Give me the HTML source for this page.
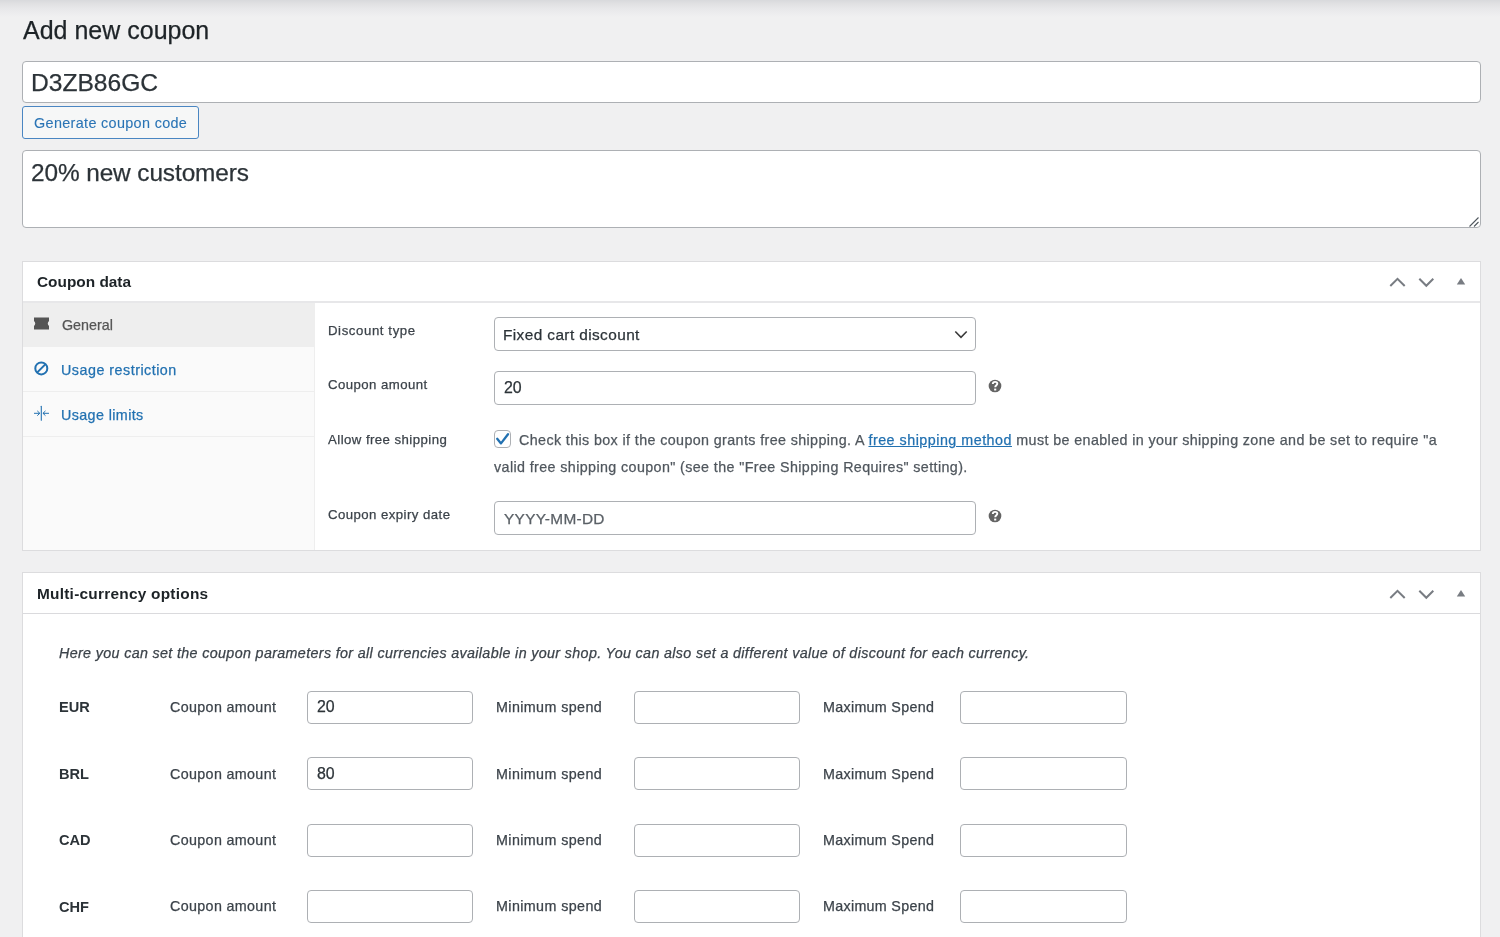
<!DOCTYPE html>
<html><head><meta charset="utf-8"><title>Add new coupon</title>
<style>
html,body{margin:0;padding:0}
body{width:1500px;height:937px;overflow:hidden;position:relative;background:#f0f0f1;font-family:"Liberation Sans",sans-serif}
.t{position:absolute;white-space:nowrap;will-change:transform;-webkit-text-stroke:0.25px currentColor}
.b{position:absolute}
</style></head><body>
<div class="b" style="left:0;top:0;width:1500px;height:18px;background:linear-gradient(#d8d9dc 0px,#dfdfe1 3px,#e7e7e9 8px,#ececee 13px,#f0f0f1 17px)"></div>
<div class="t" style="left:22.5px;top:14.64px;font-size:25px;line-height:31px;color:#1d2327;font-weight:400;font-style:normal;letter-spacing:0px;">Add new coupon</div>
<div class="b" style="left:22px;top:61px;width:1459px;height:42px;background:#fff;border:1px solid #adb0b4;border-radius:4px;box-sizing:border-box"></div>
<div class="t" style="left:31.0px;top:67.48px;font-size:24.6px;line-height:31px;color:#2c3338;font-weight:400;font-style:normal;letter-spacing:0px;">D3ZB86GC</div>
<div class="b" style="left:22px;top:106px;width:177px;height:33px;background:#f6f7f7;border:1px solid #4a86c2;border-radius:3px;box-sizing:border-box"></div>
<div class="t" style="left:33.7px;top:113.71px;font-size:14.4px;line-height:18px;color:#2a74b5;font-weight:400;font-style:normal;letter-spacing:0.34px;-webkit-text-stroke:0.1px currentColor">Generate coupon code</div>
<div class="b" style="left:22px;top:150px;width:1459px;height:78px;background:#fff;border:1px solid #adb0b4;border-radius:4px;box-sizing:border-box"></div>
<div class="t" style="left:31.0px;top:157.85px;font-size:24.4px;line-height:30px;color:#2c3338;font-weight:400;font-style:normal;letter-spacing:-0.1px;">20% new customers</div>
<svg class="b" style="left:1467px;top:214.5px" width="13" height="13" viewBox="0 0 13 13"><path d="M2.5 11.5 L11.5 2.5 M7 11.5 L11.5 7" stroke="#50575e" stroke-width="1.1" fill="none"/></svg>
<div class="b" style="left:22px;top:261px;width:1459px;height:290px;background:#fff;border:1px solid #dcdcde;box-sizing:border-box"></div>
<div class="b" style="left:23px;top:301px;width:1457px;height:2px;background:#e7e7e9"></div>
<div class="t" style="left:37.0px;top:272.16px;font-size:15.4px;line-height:19px;color:#1d2327;font-weight:700;font-style:normal;letter-spacing:0px;-webkit-text-stroke:0">Coupon data</div>
<svg class="b" style="left:1385px;top:277px" width="90" height="16" viewBox="0 0 90 16"><path d="M5.3 9 L12.5 1.8 L19.7 9" stroke="#787c82" stroke-width="2" fill="none"/><path d="M34.3 1.8 L41.3 8.8 L48.3 1.8" stroke="#787c82" stroke-width="2" fill="none"/><path d="M76 0.9 L80.2 7.4 L71.8 7.4 Z" fill="#787c82"/></svg>
<div class="b" style="left:23px;top:303px;width:292px;height:247px;background:#fafafa;border-right:1px solid #eee;box-sizing:border-box"></div>
<div class="b" style="left:23px;top:303px;width:291px;height:44px;background:#eee"></div>
<div class="b" style="left:23px;top:391px;width:291px;height:1px;background:#eee"></div>
<div class="b" style="left:23px;top:436px;width:291px;height:1px;background:#eee"></div>
<svg class="b" style="left:34px;top:317.4px" width="15" height="13" viewBox="0 0 15 13"><path d="M0 0.5 H15 V4 Q12.5 6.5 15 9 V12.5 H0 V9 Q2.5 6.5 0 4 Z" fill="#555"/></svg>
<div class="t" style="left:62.0px;top:315.85px;font-size:14.3px;line-height:18px;color:#555;font-weight:400;font-style:normal;letter-spacing:0px;">General</div>
<svg class="b" style="left:34px;top:361px" width="15" height="15" viewBox="0 0 15 15"><circle cx="7.3" cy="7.4" r="6" stroke="#2271b1" stroke-width="2" fill="none"/><path d="M3.3 11.4 L11.3 3.4" stroke="#2271b1" stroke-width="2"/></svg>
<div class="t" style="left:61.0px;top:360.75px;font-size:14.3px;line-height:18px;color:#2271b1;font-weight:400;font-style:normal;letter-spacing:0.5px;">Usage restriction</div>
<svg class="b" style="left:34px;top:405px" width="16" height="17" viewBox="0 0 16 17"><path d="M7.3 1.3 V15.3" stroke="#2271b1" stroke-width="1.1" stroke-linecap="round"/><path d="M0.4 8.3 H5.6 M3.6 6.2 L5.8 8.3 L3.6 10.4 M14.6 8.3 H9.2 M11.2 6.2 L9 8.3 L11.2 10.4" stroke="#2271b1" stroke-width="1.0" fill="none" stroke-linecap="round" stroke-linejoin="round"/></svg>
<div class="t" style="left:61.0px;top:405.65px;font-size:14.3px;line-height:18px;color:#2271b1;font-weight:400;font-style:normal;letter-spacing:0.4px;">Usage limits</div>
<div class="t" style="left:328.4px;top:323.03px;font-size:13.2px;line-height:16px;color:#3c434a;font-weight:400;font-style:normal;letter-spacing:0.6px;">Discount type</div>
<div class="b" style="left:494px;top:317px;width:482px;height:34px;background:#fff;border:1px solid #adb0b4;border-radius:4px;box-sizing:border-box"></div>
<div class="t" style="left:503.0px;top:324.86px;font-size:15.4px;line-height:19px;color:#2c3338;font-weight:400;font-style:normal;letter-spacing:0.4px;">Fixed cart discount</div>
<svg class="b" style="left:954px;top:330px" width="14" height="10" viewBox="0 0 14 10"><path d="M1.3 1.5 L7 7.3 L12.7 1.5" stroke="#3a3a3a" stroke-width="1.6" fill="none"/></svg>
<div class="t" style="left:328.4px;top:376.83px;font-size:13.2px;line-height:16px;color:#3c434a;font-weight:400;font-style:normal;letter-spacing:0.45px;">Coupon amount</div>
<div class="b" style="left:494px;top:371px;width:482px;height:34px;background:#fff;border:1px solid #adb0b4;border-radius:4px;box-sizing:border-box"></div>
<div class="t" style="left:503.5px;top:378.29px;font-size:15.9px;line-height:20px;color:#2c3338;font-weight:400;font-style:normal;letter-spacing:0px;">20</div>
<svg class="b" style="left:988.3px;top:379.1px" width="14" height="14" viewBox="0 0 14 14"><circle cx="7" cy="7" r="6.35" fill="#646464"/><path d="M4.8 5.1 C4.8 3.6 5.8 2.9 7.1 2.9 C8.4 2.9 9.3 3.7 9.3 4.8 C9.3 6.2 7.2 6.3 7.2 8.3" stroke="#fff" stroke-width="1.9" fill="none"/><rect x="6.15" y="9.6" width="2.1" height="1.9" fill="#fff"/></svg>
<div class="t" style="left:328.4px;top:431.73px;font-size:13.2px;line-height:16px;color:#3c434a;font-weight:400;font-style:normal;letter-spacing:0.45px;">Allow free shipping</div>
<div class="b" style="left:494px;top:430px;width:17px;height:17.5px;background:#fff;border:1px solid #adb0b4;border-radius:4px;box-sizing:border-box"></div>
<svg class="b" style="left:494px;top:430px" width="18" height="18" viewBox="0 0 18 18"><path d="M3.2 8.8 L7 13.4 L14 4.2" stroke="#2271b1" stroke-width="2.3" fill="none" stroke-linejoin="round" stroke-linecap="round"/></svg>
<div class="t" style="left:519.2px;top:430.95px;font-size:14.3px;line-height:18px;color:#50575e;font-weight:400;font-style:normal;letter-spacing:0.385px;white-space:nowrap">Check this box if the coupon grants free shipping. A <span style="color:#2271b1;text-decoration:underline;letter-spacing:0.5px">free shipping method</span> must be enabled in your shipping zone and be set to require "a</div>
<div class="t" style="left:494.0px;top:457.85px;font-size:14.3px;line-height:18px;color:#50575e;font-weight:400;font-style:normal;letter-spacing:0.39px;white-space:nowrap">valid free shipping coupon" (see the "Free Shipping Requires" setting).</div>
<div class="t" style="left:328.4px;top:507.23px;font-size:13.2px;line-height:16px;color:#3c434a;font-weight:400;font-style:normal;letter-spacing:0.45px;">Coupon expiry date</div>
<div class="b" style="left:494px;top:501px;width:482px;height:34px;background:#fff;border:1px solid #adb0b4;border-radius:4px;box-sizing:border-box"></div>
<div class="t" style="left:504.0px;top:508.76px;font-size:15.4px;line-height:19px;color:#5a6066;font-weight:400;font-style:normal;letter-spacing:0.3px;">YYYY-MM-DD</div>
<svg class="b" style="left:988.2px;top:509px" width="14" height="14" viewBox="0 0 14 14"><circle cx="7" cy="7" r="6.35" fill="#646464"/><path d="M4.8 5.1 C4.8 3.6 5.8 2.9 7.1 2.9 C8.4 2.9 9.3 3.7 9.3 4.8 C9.3 6.2 7.2 6.3 7.2 8.3" stroke="#fff" stroke-width="1.9" fill="none"/><rect x="6.15" y="9.6" width="2.1" height="1.9" fill="#fff"/></svg>
<div class="b" style="left:22px;top:572px;width:1459px;height:400px;background:#fff;border:1px solid #dcdcde;box-sizing:border-box"></div>
<div class="b" style="left:23px;top:613px;width:1457px;height:1px;background:#dadadd"></div>
<div class="t" style="left:37.0px;top:583.66px;font-size:15.4px;line-height:19px;color:#1d2327;font-weight:700;font-style:normal;letter-spacing:0.25px;-webkit-text-stroke:0">Multi-currency options</div>
<svg class="b" style="left:1385px;top:588.8px" width="90" height="16" viewBox="0 0 90 16"><path d="M5.3 9 L12.5 1.8 L19.7 9" stroke="#787c82" stroke-width="2" fill="none"/><path d="M34.3 1.8 L41.3 8.8 L48.3 1.8" stroke="#787c82" stroke-width="2" fill="none"/><path d="M76 0.9 L80.2 7.4 L71.8 7.4 Z" fill="#787c82"/></svg>
<div class="t" style="left:59.0px;top:643.75px;font-size:14.3px;line-height:18px;color:#3c434a;font-weight:400;font-style:italic;letter-spacing:0.35px;white-space:nowrap">Here you can set the coupon parameters for all currencies available in your shop. You can also set a different value of discount for each currency.</div>
<div class="t" style="left:59.3px;top:698.04px;font-size:14.6px;line-height:18px;color:#2c3338;font-weight:700;font-style:normal;letter-spacing:0px;-webkit-text-stroke:0">EUR</div>
<div class="t" style="left:170.0px;top:697.75px;font-size:14.3px;line-height:18px;color:#3c434a;font-weight:400;font-style:normal;letter-spacing:0.35px;">Coupon amount</div>
<div class="b" style="left:307px;top:691px;width:166px;height:33px;background:#fff;border:1px solid #adb0b4;border-radius:4px;box-sizing:border-box"></div>
<div class="t" style="left:316.8px;top:696.99px;font-size:15.9px;line-height:20px;color:#2c3338;font-weight:400;font-style:normal;letter-spacing:0px;">20</div>
<div class="t" style="left:495.7px;top:697.75px;font-size:14.3px;line-height:18px;color:#3c434a;font-weight:400;font-style:normal;letter-spacing:0.4px;">Minimum spend</div>
<div class="b" style="left:634px;top:691px;width:166px;height:33px;background:#fff;border:1px solid #adb0b4;border-radius:4px;box-sizing:border-box"></div>
<div class="t" style="left:822.8px;top:697.75px;font-size:14.3px;line-height:18px;color:#3c434a;font-weight:400;font-style:normal;letter-spacing:0.3px;">Maximum Spend</div>
<div class="b" style="left:960px;top:691px;width:167px;height:33px;background:#fff;border:1px solid #adb0b4;border-radius:4px;box-sizing:border-box"></div>
<div class="t" style="left:59.3px;top:764.84px;font-size:14.6px;line-height:18px;color:#2c3338;font-weight:700;font-style:normal;letter-spacing:0px;-webkit-text-stroke:0">BRL</div>
<div class="t" style="left:170.0px;top:764.55px;font-size:14.3px;line-height:18px;color:#3c434a;font-weight:400;font-style:normal;letter-spacing:0.35px;">Coupon amount</div>
<div class="b" style="left:307px;top:757px;width:166px;height:33px;background:#fff;border:1px solid #adb0b4;border-radius:4px;box-sizing:border-box"></div>
<div class="t" style="left:316.8px;top:763.79px;font-size:15.9px;line-height:20px;color:#2c3338;font-weight:400;font-style:normal;letter-spacing:0px;">80</div>
<div class="t" style="left:495.7px;top:764.55px;font-size:14.3px;line-height:18px;color:#3c434a;font-weight:400;font-style:normal;letter-spacing:0.4px;">Minimum spend</div>
<div class="b" style="left:634px;top:757px;width:166px;height:33px;background:#fff;border:1px solid #adb0b4;border-radius:4px;box-sizing:border-box"></div>
<div class="t" style="left:822.8px;top:764.55px;font-size:14.3px;line-height:18px;color:#3c434a;font-weight:400;font-style:normal;letter-spacing:0.3px;">Maximum Spend</div>
<div class="b" style="left:960px;top:757px;width:167px;height:33px;background:#fff;border:1px solid #adb0b4;border-radius:4px;box-sizing:border-box"></div>
<div class="t" style="left:59.3px;top:831.14px;font-size:14.6px;line-height:18px;color:#2c3338;font-weight:700;font-style:normal;letter-spacing:0px;-webkit-text-stroke:0">CAD</div>
<div class="t" style="left:170.0px;top:830.85px;font-size:14.3px;line-height:18px;color:#3c434a;font-weight:400;font-style:normal;letter-spacing:0.35px;">Coupon amount</div>
<div class="b" style="left:307px;top:824px;width:166px;height:33px;background:#fff;border:1px solid #adb0b4;border-radius:4px;box-sizing:border-box"></div>
<div class="t" style="left:495.7px;top:830.85px;font-size:14.3px;line-height:18px;color:#3c434a;font-weight:400;font-style:normal;letter-spacing:0.4px;">Minimum spend</div>
<div class="b" style="left:634px;top:824px;width:166px;height:33px;background:#fff;border:1px solid #adb0b4;border-radius:4px;box-sizing:border-box"></div>
<div class="t" style="left:822.8px;top:830.85px;font-size:14.3px;line-height:18px;color:#3c434a;font-weight:400;font-style:normal;letter-spacing:0.3px;">Maximum Spend</div>
<div class="b" style="left:960px;top:824px;width:167px;height:33px;background:#fff;border:1px solid #adb0b4;border-radius:4px;box-sizing:border-box"></div>
<div class="t" style="left:59.3px;top:897.54px;font-size:14.6px;line-height:18px;color:#2c3338;font-weight:700;font-style:normal;letter-spacing:0px;-webkit-text-stroke:0">CHF</div>
<div class="t" style="left:170.0px;top:897.25px;font-size:14.3px;line-height:18px;color:#3c434a;font-weight:400;font-style:normal;letter-spacing:0.35px;">Coupon amount</div>
<div class="b" style="left:307px;top:890px;width:166px;height:33px;background:#fff;border:1px solid #adb0b4;border-radius:4px;box-sizing:border-box"></div>
<div class="t" style="left:495.7px;top:897.25px;font-size:14.3px;line-height:18px;color:#3c434a;font-weight:400;font-style:normal;letter-spacing:0.4px;">Minimum spend</div>
<div class="b" style="left:634px;top:890px;width:166px;height:33px;background:#fff;border:1px solid #adb0b4;border-radius:4px;box-sizing:border-box"></div>
<div class="t" style="left:822.8px;top:897.25px;font-size:14.3px;line-height:18px;color:#3c434a;font-weight:400;font-style:normal;letter-spacing:0.3px;">Maximum Spend</div>
<div class="b" style="left:960px;top:890px;width:167px;height:33px;background:#fff;border:1px solid #adb0b4;border-radius:4px;box-sizing:border-box"></div>
</body></html>
